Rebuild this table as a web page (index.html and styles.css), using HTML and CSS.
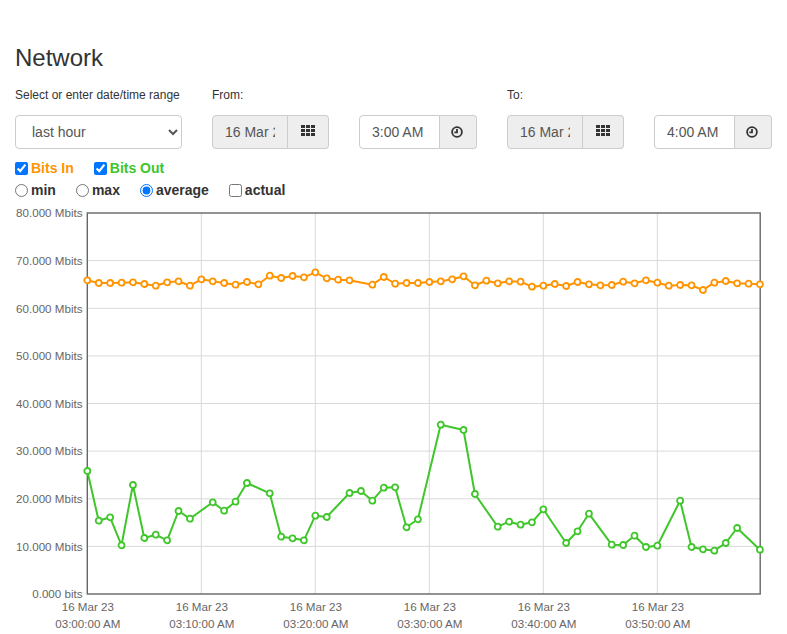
FILE: index.html
```html
<!DOCTYPE html>
<html>
<head>
<meta charset="utf-8">
<title>Network</title>
<link rel="stylesheet" href="styles.css">
</head>
<body>
<div class="page">
  <h3 class="title">Network</h3>
  <div class="range-grid">
    <div class="lbl">Select or enter date/time range</div>
    <div class="lbl">From:</div>
    <div class="lbl"></div>
    <div class="lbl">To:</div>
    <div class="lbl"></div>

    <select class="range-select">
      <option>last hour</option>
      <option>last day</option>
      <option>last week</option>
    </select>
    <div class="igroup">
      <input class="ig-input date-input" type="text" value="16 Mar 2023" readonly>
      <span class="ig-addon addon-date">
        <svg class="ico-grid" width="14" height="11" viewBox="0 0 14 11"><rect x="0" y="0" width="4" height="3"/><rect x="5" y="0" width="4" height="3"/><rect x="10" y="0" width="4" height="3"/><rect x="0" y="4" width="4" height="3"/><rect x="5" y="4" width="4" height="3"/><rect x="10" y="4" width="4" height="3"/><rect x="0" y="8" width="4" height="3"/><rect x="5" y="8" width="4" height="3"/><rect x="10" y="8" width="4" height="3"/></svg>
      </span>
    </div>
    <div class="igroup">
      <input class="ig-input time-input" type="text" value="3:00 AM">
      <span class="ig-addon addon-time">
        <svg class="ico-clock" width="12" height="12" viewBox="0 0 12 12"><circle cx="6" cy="6" r="4.9"/><path d="M6 2.9 V6.4 H3.4"/></svg>
      </span>
    </div>
    <div class="igroup">
      <input class="ig-input date-input" type="text" value="16 Mar 2023" readonly>
      <span class="ig-addon addon-date">
        <svg class="ico-grid" width="14" height="11" viewBox="0 0 14 11"><rect x="0" y="0" width="4" height="3"/><rect x="5" y="0" width="4" height="3"/><rect x="10" y="0" width="4" height="3"/><rect x="0" y="4" width="4" height="3"/><rect x="5" y="4" width="4" height="3"/><rect x="10" y="4" width="4" height="3"/><rect x="0" y="8" width="4" height="3"/><rect x="5" y="8" width="4" height="3"/><rect x="10" y="8" width="4" height="3"/></svg>
      </span>
    </div>
    <div class="igroup">
      <input class="ig-input time-input" type="text" value="4:00 AM">
      <span class="ig-addon addon-time">
        <svg class="ico-clock" width="12" height="12" viewBox="0 0 12 12"><circle cx="6" cy="6" r="4.9"/><path d="M6 2.9 V6.4 H3.4"/></svg>
      </span>
    </div>
  </div>

  <div class="opts opts-first">
    <label class="opt bits-in"><input type="checkbox" checked>Bits In</label>
    <label class="opt bits-out"><input type="checkbox" checked>Bits Out</label>
  </div>
  <div class="opts">
    <label class="opt"><input type="radio" name="agg">min</label>
    <label class="opt"><input type="radio" name="agg">max</label>
    <label class="opt"><input type="radio" name="agg" checked>average</label>
    <label class="opt"><input type="checkbox">actual</label>
  </div>

  <svg class="chart" width="772" height="433" viewBox="15 201 772 433">
    <defs>
      <marker id="mo" viewBox="0 0 10 10" refX="5" refY="5" markerWidth="10" markerHeight="10" markerUnits="userSpaceOnUse">
        <circle cx="5" cy="5" r="3" fill="#fff" stroke="#ff9400" stroke-width="1.8"/>
      </marker>
      <marker id="mg" viewBox="0 0 10 10" refX="5" refY="5" markerWidth="10" markerHeight="10" markerUnits="userSpaceOnUse">
        <circle cx="5" cy="5" r="3" fill="#fff" stroke="#3fc62a" stroke-width="1.8"/>
      </marker>
    </defs>
    <g class="grid">
      <line x1="87.3" y1="260.6" x2="760" y2="260.6"/>
      <line x1="87.3" y1="308.3" x2="760" y2="308.3"/>
      <line x1="87.3" y1="355.9" x2="760" y2="355.9"/>
      <line x1="87.3" y1="403.5" x2="760" y2="403.5"/>
      <line x1="87.3" y1="451.1" x2="760" y2="451.1"/>
      <line x1="87.3" y1="498.8" x2="760" y2="498.8"/>
      <line x1="87.3" y1="546.4" x2="760" y2="546.4"/>
      <line x1="201.3" y1="213" x2="201.3" y2="594"/>
      <line x1="315.3" y1="213" x2="315.3" y2="594"/>
      <line x1="429.3" y1="213" x2="429.3" y2="594"/>
      <line x1="543.3" y1="213" x2="543.3" y2="594"/>
      <line x1="657.3" y1="213" x2="657.3" y2="594"/>
    </g>
    <rect class="frame" x="87.3" y="213" width="672.9" height="381"/>
    <g class="ylab">
      <text x="82.5" y="217.3">80.000 Mbits</text>
      <text x="82.5" y="264.9">70.000 Mbits</text>
      <text x="82.5" y="312.5">60.000 Mbits</text>
      <text x="82.5" y="360.2">50.000 Mbits</text>
      <text x="82.5" y="407.8">40.000 Mbits</text>
      <text x="82.5" y="455.4">30.000 Mbits</text>
      <text x="82.5" y="503">20.000 Mbits</text>
      <text x="82.5" y="550.7">10.000 Mbits</text>
      <text x="82.5" y="598.3">0.000 bits</text>
    </g>
    <g class="xlab">
      <text x="87.8" y="611">16 Mar 23</text><text x="87.8" y="628.3">03:00:00 AM</text>
      <text x="201.8" y="611">16 Mar 23</text><text x="201.8" y="628.3">03:10:00 AM</text>
      <text x="315.8" y="611">16 Mar 23</text><text x="315.8" y="628.3">03:20:00 AM</text>
      <text x="429.8" y="611">16 Mar 23</text><text x="429.8" y="628.3">03:30:00 AM</text>
      <text x="543.8" y="611">16 Mar 23</text><text x="543.8" y="628.3">03:40:00 AM</text>
      <text x="657.8" y="611">16 Mar 23</text><text x="657.8" y="628.3">03:50:00 AM</text>
    </g>
    <polyline class="series s-in" points="87.3,280.3 98.7,283 110.1,283 121.5,282.7 132.9,282.3 144.3,284 155.7,285.7 167.1,282.3 178.5,281.3 189.9,285.7 201.3,279.3 212.7,281.3 224.1,283 235.5,284.7 246.9,282 258.3,284.3 269.7,275.7 281.1,278 292.5,276 303.9,277.3 315.3,272.3 326.7,278.3 338.1,279.7 349.5,280.3 372.3,284.7 383.7,277 395.1,283.7 406.5,283 417.9,283 429.3,282 440.7,281.3 452.1,279.3 463.5,276.3 474.9,285.3 486.3,280.7 497.7,283.3 509.1,281.3 520.5,281.7 531.9,286.7 543.3,285.7 554.7,284 566.1,286 577.5,282 588.9,284.3 600.3,285.3 611.7,285 623.1,281.7 634.5,283.3 645.9,280.3 657.3,282.7 668.7,285.7 680.1,285 691.5,285.3 702.9,290 714.3,282.7 725.7,281 737.1,283.3 748.5,283.7 759.9,284.3"/>
    <polyline class="series s-out" points="87.3,471 98.7,520.7 110.1,517.3 121.5,545.3 132.9,485 144.3,538 155.7,534.7 167.1,540.3 178.5,511 189.9,518.7 212.7,502.3 224.1,510.7 235.5,501.7 246.9,483 269.7,493.3 281.1,536.7 292.5,538.3 303.9,540.3 315.3,515.7 326.7,517 349.5,493 360.9,491 372.3,500.7 383.7,487.7 395.1,487.3 406.5,527.3 417.9,519.3 440.7,424.7 463.5,430 474.9,494 497.7,526.7 509.1,521.7 520.5,524.7 531.9,522.3 543.3,509.3 566.1,543 577.5,531.3 588.9,513.7 611.7,544.7 623.1,545 634.5,535.7 645.9,547 657.3,545.7 680.1,500.7 691.5,547 702.9,549.3 714.3,550.7 725.7,543 737.1,528 759.9,549.7"/>
  </svg>
</div>
</body>
</html>
```

FILE: styles.css
```css
html, body {
  margin: 0;
  padding: 0;
  overflow: hidden;
}
body {
  font-family: "Liberation Sans", Arial, sans-serif;
  color: #333;
  background: #fff;
}
.page {
  padding: 45px 0 0 15px;
}
.title {
  margin: 0 0 16px 0;
  font-size: 24px;
  font-weight: 500;
  line-height: 26px;
  color: #333;
}
.range-grid {
  display: grid;
  grid-template-columns: 167px 117px 118px 117px 118px;
  column-gap: 30px;
  row-gap: 11px;
}
.lbl {
  font-size: 12px;
  line-height: 17px;
  height: 17px;
  color: #333;
  white-space: nowrap;
}
.range-select {
  box-sizing: border-box;
  width: 167px;
  height: 34px;
  padding: 6px 8px 6px 12px;
  font-family: "Liberation Sans", Arial, sans-serif;
  font-size: 14px;
  color: #555;
  background: #fff;
  border: 1px solid #ccc;
  border-radius: 4px;
  margin: 0;
}
.igroup {
  display: flex;
  height: 34px;
}
.ig-input {
  box-sizing: border-box;
  height: 34px;
  margin: 0;
  padding: 6px 12px;
  font-family: "Liberation Sans", Arial, sans-serif;
  font-size: 14px;
  color: #555;
  border: 1px solid #ccc;
  border-radius: 4px 0 0 4px;
  background: #fff;
  outline: none;
}
.date-input {
  width: 76px;
  background: #eee;
}
.time-input {
  width: 81px;
}
.ig-addon {
  box-sizing: border-box;
  height: 34px;
  display: flex;
  align-items: center;
  justify-content: center;
  background: #eee;
  border: 1px solid #ccc;
  border-left: 0;
  border-radius: 0 4px 4px 0;
}
.addon-date {
  width: 41px;
}
.addon-time {
  width: 37px;
  padding-right: 2px;
}
.ico-grid {
  fill: #333;
  margin-bottom: 3px;
}
.ico-clock {
  fill: none;
  stroke: #333;
  stroke-width: 1.8;
  margin-bottom: 1px;
}
.opts {
  display: flex;
  align-items: center;
  height: 22px;
  line-height: 22px;
}
.opts-first {
  margin-top: 8px;
}
.opt {
  display: inline-flex;
  align-items: center;
  margin-right: 20px;
  font-size: 14px;
  font-weight: bold;
  color: #333;
}
.opt input {
  margin: 0 3px 0 0;
  width: 13px;
  height: 13px;
}
.bits-in {
  color: #ff9400;
}
.bits-out {
  color: #3fc62a;
}
.chart {
  display: block;
}
.grid line {
  stroke: #d9d9d9;
  stroke-width: 1;
}
.frame {
  fill: none;
  stroke: #666;
  stroke-width: 1.4;
}
.ylab text {
  font-family: "Liberation Sans", Arial, sans-serif;
  font-size: 11.6px;
  fill: #666;
  text-anchor: end;
}
.xlab text {
  font-family: "Liberation Sans", Arial, sans-serif;
  font-size: 11.6px;
  fill: #666;
  text-anchor: middle;
}
.series {
  fill: none;
  stroke-width: 2;
  stroke-linejoin: round;
}
.s-in {
  stroke: #ff9400;
  marker-start: url(#mo);
  marker-mid: url(#mo);
  marker-end: url(#mo);
}
.s-out {
  stroke: #3fc62a;
  marker-start: url(#mg);
  marker-mid: url(#mg);
  marker-end: url(#mg);
}
```
